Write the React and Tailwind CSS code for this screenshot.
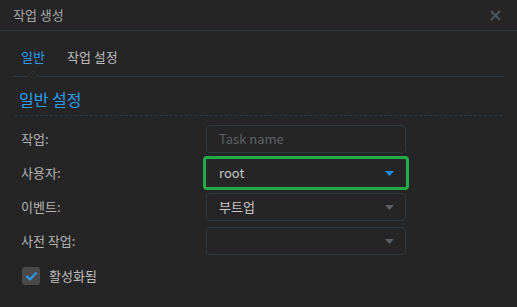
import React from 'react';

const font = { fontFamily: '"Noto Sans CJK KR", "Noto Sans", sans-serif' };

function Arrow({ active }) {
  return (
    <svg width="9" height="5" viewBox="0 0 9 5" className="shrink-0">
      <path d="M0 0h9L4.5 5z" fill={active ? '#1e8fe6' : '#5a6168'} />
    </svg>
  );
}

function Field({ children, placeholder, select, active }) {
  return (
    <div
      className={`flex h-[28px] w-[200px] items-center justify-between border pl-[12px] pr-[11px] text-[13px] ${
        active
          ? 'rounded-[1px] border-[#25292d] outline-[3px] outline-[#21ac48] outline-offset-0'
          : 'rounded-[4px] border-[#2f3a43]'
      }`}
    >
      {placeholder ? (
        <span className="text-[#5d6166]">{placeholder}</span>
      ) : (
        <span className="text-[#c8c8c8]">{children}</span>
      )}
      {select && <Arrow active={active} />}
    </div>
  );
}

function Row({ label, children }) {
  return (
    <div className="flex items-center">
      <div className="w-[185px] text-[13px] text-[#b4b4b4]">{label}</div>
      {children}
    </div>
  );
}

export default function App() {
  return (
    <div className="h-[307px] w-[517px] overflow-hidden bg-[#252525]" style={font}>
      {/* Header */}
      <div className="flex h-[31px] items-center justify-between border-b border-[#2c3640] pl-[13px] pr-[16px]">
        <span className="text-[13px] text-[#a8a8a8]">작업 생성</span>
        <svg width="11" height="11" viewBox="0 0 11 11">
          <path d="M1 1l9 9M10 1l-9 9" stroke="#4c555e" strokeWidth="2.2" />
        </svg>
      </div>

      {/* Tabs */}
      <div className="relative mx-[13px] flex h-[46px] items-center gap-[22px] border-b border-[#2c3944] pl-[8px] pt-[6px] text-[13px]">
        <span className="text-[#2a9df4]">일반</span>
        <span className="text-[#bdbdbd]">작업 설정</span>
        <svg className="absolute left-[14px] top-[40px]" width="12" height="6" viewBox="0 0 12 6">
          <path d="M0 6L6 0l6 6" fill="#252525" stroke="#2c3944" strokeWidth="1" />
        </svg>
      </div>

      {/* Section */}
      <div className="mx-[15px] mt-[11px] border-b border-dashed border-[#2c3944] pb-[4px] pl-[4px] text-[16px] leading-[23px] text-[#2a9df4]">
        일반 설정
      </div>

      <div className="mt-[9px] flex flex-col gap-[6px] pl-[21px]">
        <Row label="작업:">
          <Field placeholder="Task name" />
        </Row>
        <Row label="사용자:">
          <Field select active>root</Field>
        </Row>
        <Row label="이벤트:">
          <Field select>부트업</Field>
        </Row>
        <Row label="사전 작업:">
          <Field select />
        </Row>
        <div className="mt-[5px] flex items-center gap-[9px] pl-[1px]">
          <div className="flex h-[18px] w-[18px] items-center justify-center rounded-[3px] bg-[#4a4a4a]">
            <svg width="13" height="10" viewBox="0 0 13 10">
              <path d="M1.5 5l3.5 3.5 6.5-7" fill="none" stroke="#2a9df4" strokeWidth="2" />
            </svg>
          </div>
          <span className="text-[13px] text-[#bdbdbd]">활성화됨</span>
        </div>
      </div>
    </div>
  );
}
